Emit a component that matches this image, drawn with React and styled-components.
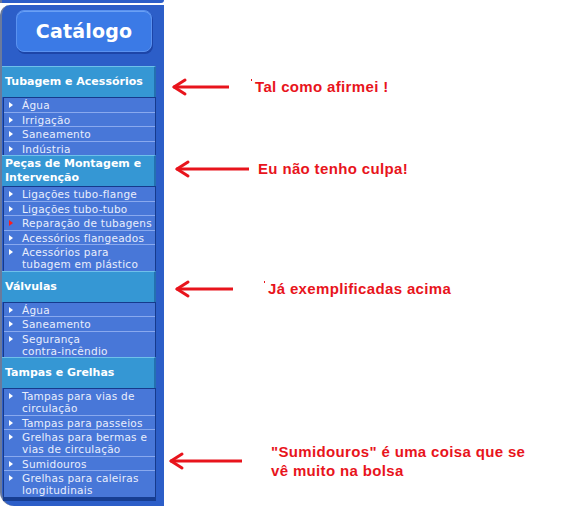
import React from 'react'
import styled, { createGlobalStyle } from 'styled-components'

const GlobalStyle = createGlobalStyle`
  html, body {
    margin: 0;
    padding: 0;
    background: #ffffff;
  }
`

const Page = styled.div`
  width: 570px;
  height: 513px;
  overflow: hidden;
  background: #ffffff;
  display: flex;
  align-items: flex-start;
`

const Sidebar = styled.div`
  flex: 0 0 164px;
  display: flex;
  flex-direction: column;
`

const TopStrip = styled.div`
  height: 3px;
  background: #2c5ec8;
  border-left: 2px solid #6b7a9c;
  border-bottom-right-radius: 4px;
  margin-bottom: 2px;
`

const Panel = styled.div`
  background: #2c5ec8;
  border-left: 2px solid #6b7a9c;
  border-top-left-radius: 10px;
  border-bottom-left-radius: 14px;
  padding: 5px 0 9px 0;
  display: flex;
  flex-direction: column;
`

const TitleButton = styled.div`
  margin: 0 12px 14px 14px;
  height: 40px;
  border-radius: 8px;
  background: #3b7ae6;
  border: 1px solid #5a92f0;
  box-shadow: 1px 2px 0 #1d45a8, inset 0 1px 0 #6aa0f4;
  display: flex;
  align-items: center;
  justify-content: center;
  color: #ffffff;
  font-family: "DejaVu Sans", Verdana, sans-serif;
  font-weight: bold;
  font-size: 19px;
  letter-spacing: 0.2px;
`

const Header = styled.div`
  width: 154px;
  box-sizing: border-box;
  min-height: 31px;
  padding: 1px 2px 1px 3px;
  background: #3597d4;
  border-top: 1px solid #6fc0ea;
  border-right: 2px solid #2470b0;
  display: flex;
  align-items: center;
  color: #ffffff;
  font-family: "DejaVu Sans", Verdana, sans-serif;
  font-weight: bold;
  font-size: 11px;
  line-height: 14px;
`

const ItemList = styled.div`
  width: 153px;
  box-sizing: border-box;
  margin-left: 1px;
  background: #4877d8;
  border-top: 1px solid #163a8c;
  border-left: 1px solid #163a8c;
  border-right: 1px solid #163a8c;
  box-shadow: ${p => (p.last ? '0 4px 0 #173e92' : 'none')};
  display: flex;
  flex-direction: column;
`

const Item = styled.div`
  display: flex;
  align-items: flex-start;
  padding: 1px 0 0.5px 4px;
  border-bottom: 1px solid #89a9ee;
  color: #e8eefc;
  font-family: "DejaVu Sans", Verdana, sans-serif;
  font-size: 10.5px;
  line-height: 12px;
  letter-spacing: 0.25px;

  &:last-child {
    border-bottom: none;
  }
`

const Bullet = styled.span`
  flex: 0 0 auto;
  width: 0;
  height: 0;
  margin: 3px 9px 0 1px;
  border-top: 3px solid transparent;
  border-bottom: 3px solid transparent;
  border-left: 4px solid ${p => (p.active ? '#ff1a1a' : '#ffffff')};
`

const Notes = styled.div`
  flex: 1;
  display: flex;
  flex-direction: column;
`

const Annotation = styled.div`
  display: flex;
  align-items: center;
  margin-top: ${p => p.spaceAbove}px;
  padding-left: ${p => p.indent}px;
  gap: ${p => p.gap}px;
`

const NoteText = styled.div`
  position: relative;
  color: #e8141c;
  font-family: "Liberation Sans", Arial, sans-serif;
  font-weight: bold;
  font-size: 15px;
  letter-spacing: 0.35px;
  line-height: 19px;
  white-space: nowrap;
`

const Speck = styled.span`
  position: absolute;
  left: -4px;
  top: 2px;
  width: 1px;
  height: 2px;
  background: #e8141c;
`

const ArrowSvg = styled.svg`
  flex: 0 0 auto;
  display: block;
  overflow: visible;
`

const Arrow = ({ length }) => (
  <ArrowSvg width={length} height={16}>
    <line x1="2" y1="8" x2={length} y2="8" stroke="#e8141c" strokeWidth="3" />
    <line x1="2" y1="8" x2="13" y2="1" stroke="#e8141c" strokeWidth="3" strokeLinecap="round" />
    <line x1="2" y1="8" x2="13" y2="15" stroke="#e8141c" strokeWidth="3" strokeLinecap="round" />
  </ArrowSvg>
)

const sections = [
  {
    title: ['Tubagem e Acessórios'],
    items: [['Água'], ['Irrigação'], ['Saneamento'], ['Indústria']],
  },
  {
    title: ['Peças de Montagem e', 'Intervenção'],
    items: [
      ['Ligações tubo-flange'],
      ['Ligações tubo-tubo'],
      ['Reparação de tubagens'],
      ['Acessórios flangeados'],
      ['Acessórios para', 'tubagem em plástico'],
    ],
    active: 2,
  },
  {
    title: ['Válvulas'],
    items: [['Água'], ['Saneamento'], ['Segurança', 'contra-incêndio']],
  },
  {
    title: ['Tampas e Grelhas'],
    items: [
      ['Tampas para vias de', 'circulação'],
      ['Tampas para passeios'],
      ['Grelhas para bermas e', 'vias de circulação'],
      ['Sumidouros'],
      ['Grelhas para caleiras', 'longitudinais'],
    ],
  },
]

const notes = [
  { spaceAbove: 77, indent: 8, length: 57, gap: 26, lines: ['Tal como afirmei !'], speck: true },
  { spaceAbove: 63, indent: 11, length: 74, gap: 9, lines: ['Eu não tenho culpa!'] },
  { spaceAbove: 101, indent: 11, length: 58, gap: 35, lines: ['Já exemplificadas acima'], speck: true },
  {
    spaceAbove: 144,
    indent: 5,
    length: 73,
    gap: 29,
    lines: ['"Sumidouros" é uma coisa que se', 'vê muito na bolsa'],
  },
]

const Lines = ({ lines }) => (
  <div>
    {lines.map((l, i) => (
      <div key={i}>{l}</div>
    ))}
  </div>
)

export default function App() {
  return (
    <Page>
      <GlobalStyle />
      <Sidebar>
        <TopStrip />
        <Panel>
          <TitleButton>Catálogo</TitleButton>
          {sections.map((s, si) => (
            <React.Fragment key={si}>
              <Header>
                <Lines lines={s.title} />
              </Header>
              <ItemList last={si === sections.length - 1}>
                {s.items.map((it, ii) => (
                  <Item key={ii}>
                    <Bullet active={s.active === ii} />
                    <Lines lines={it} />
                  </Item>
                ))}
              </ItemList>
            </React.Fragment>
          ))}
        </Panel>
      </Sidebar>

      <Notes>
        {notes.map((n, i) => (
          <Annotation key={i} spaceAbove={n.spaceAbove} indent={n.indent} gap={n.gap}>
            <Arrow length={n.length} />
            <NoteText>
              {n.speck && <Speck />}
              <Lines lines={n.lines} />
            </NoteText>
          </Annotation>
        ))}
      </Notes>
    </Page>
  )
}
